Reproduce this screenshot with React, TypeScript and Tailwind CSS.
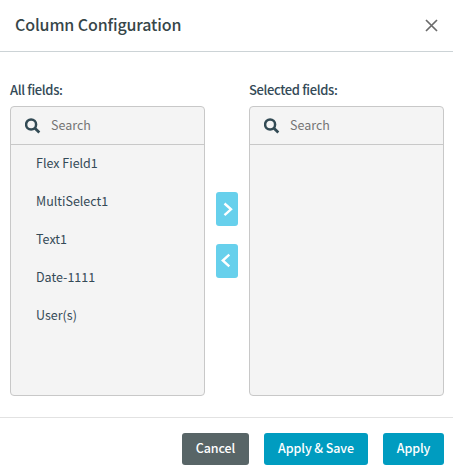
import React from "react";

const FIELDS = ["Flex Field1", "MultiSelect1", "Text1", "Date-1111", "User(s)"];

function SearchIcon() {
  return (
    <svg width="16" height="16" viewBox="0 0 16 16" fill="none" stroke="#324a54" className="shrink-0">
      <circle cx="6.1" cy="6.5" r="5" strokeWidth="2.5" />
      <path d="M9.7 10.1 L14.3 14.5" strokeWidth="2.8" />
    </svg>
  );
}

function FieldPanel({ label, fields }: { label: string; fields: string[] }) {
  return (
    <div className="w-[195px] shrink-0">
      <div className="h-[26px] text-[13px] leading-[20px] font-medium tracking-[-0.36px] whitespace-nowrap">{label}</div>
      <div className="h-[290px] rounded-[4px] border border-[#c8c8c8] bg-[#f4f4f4]">
        <div className="flex h-[38px] items-center border-b border-[#c8c8c8] pl-[14px]">
          <SearchIcon />
          <span className="ml-[10px] pb-[2px] text-[12.5px] leading-[20px] text-[#757575]">Search</span>
        </div>
        <ul>
          {fields.map((f) => (
            <li key={f} className="flex h-[38px] items-center pb-[2px] pl-[25px] text-[12.5px] leading-[20px]">
              {f}
            </li>
          ))}
        </ul>
      </div>
    </div>
  );
}

function MoveButton({ d }: { d: string }) {
  return (
    <button className="flex h-[34px] w-[22px] items-center justify-center rounded-[3px] bg-[#67d0ec]">
      <svg width="22" height="34" viewBox="0 0 22 34" fill="none" stroke="#fff" strokeWidth="2.4">
        <path d={d} />
      </svg>
    </button>
  );
}

export default function App() {
  return (
    <div className="flex h-[475px] w-[453px] flex-col bg-white font-['Noto_Sans_CJK_SC',sans-serif] text-[#344a57]">
      <header className="flex h-[52px] items-center justify-between border-b border-[#ccd3d6] pr-[15px] pl-[15px]">
        <h1 className="pb-[3px] text-[16px] leading-[24px] font-medium tracking-[-0.12px] text-[#374649]">Column Configuration</h1>
        <svg width="13" height="13" viewBox="0 0 13 13" fill="none" stroke="#6b6b6b" strokeWidth="1.7">
          <path d="M1 1 L12 12 M12 1 L1 12" />
        </svg>
      </header>
      <main className="flex h-[365px] pt-[28px] pr-[9px] pl-[10px]">
        <FieldPanel label="All fields:" fields={FIELDS} />
        <div className="flex w-[44px] shrink-0 flex-col items-center gap-[18px] pt-[112px]">
          <MoveButton d="M8.5 11.5 L15 17.3 L8.5 23.2" />
          <MoveButton d="M13.3 10.7 L6.8 16.5 L13.3 22.4" />
        </div>
        <FieldPanel label="Selected fields:" fields={[]} />
      </main>
      <footer className="flex h-[58px] justify-end gap-[15px] border-t border-[#e2e2e2] pt-[15px] pr-[9px] text-[12.5px] font-medium tracking-[-0.1px] text-white">
        <button className="h-[32px] w-[67px] rounded-[3px] bg-[#586567] pb-[2px]">Cancel</button>
        <button className="h-[32px] w-[104px] rounded-[3px] bg-[#009cc0] pb-[2px]">Apply &amp; Save</button>
        <button className="h-[32px] w-[61px] rounded-[3px] bg-[#009cc0] pb-[2px]">Apply</button>
      </footer>
    </div>
  );
}
